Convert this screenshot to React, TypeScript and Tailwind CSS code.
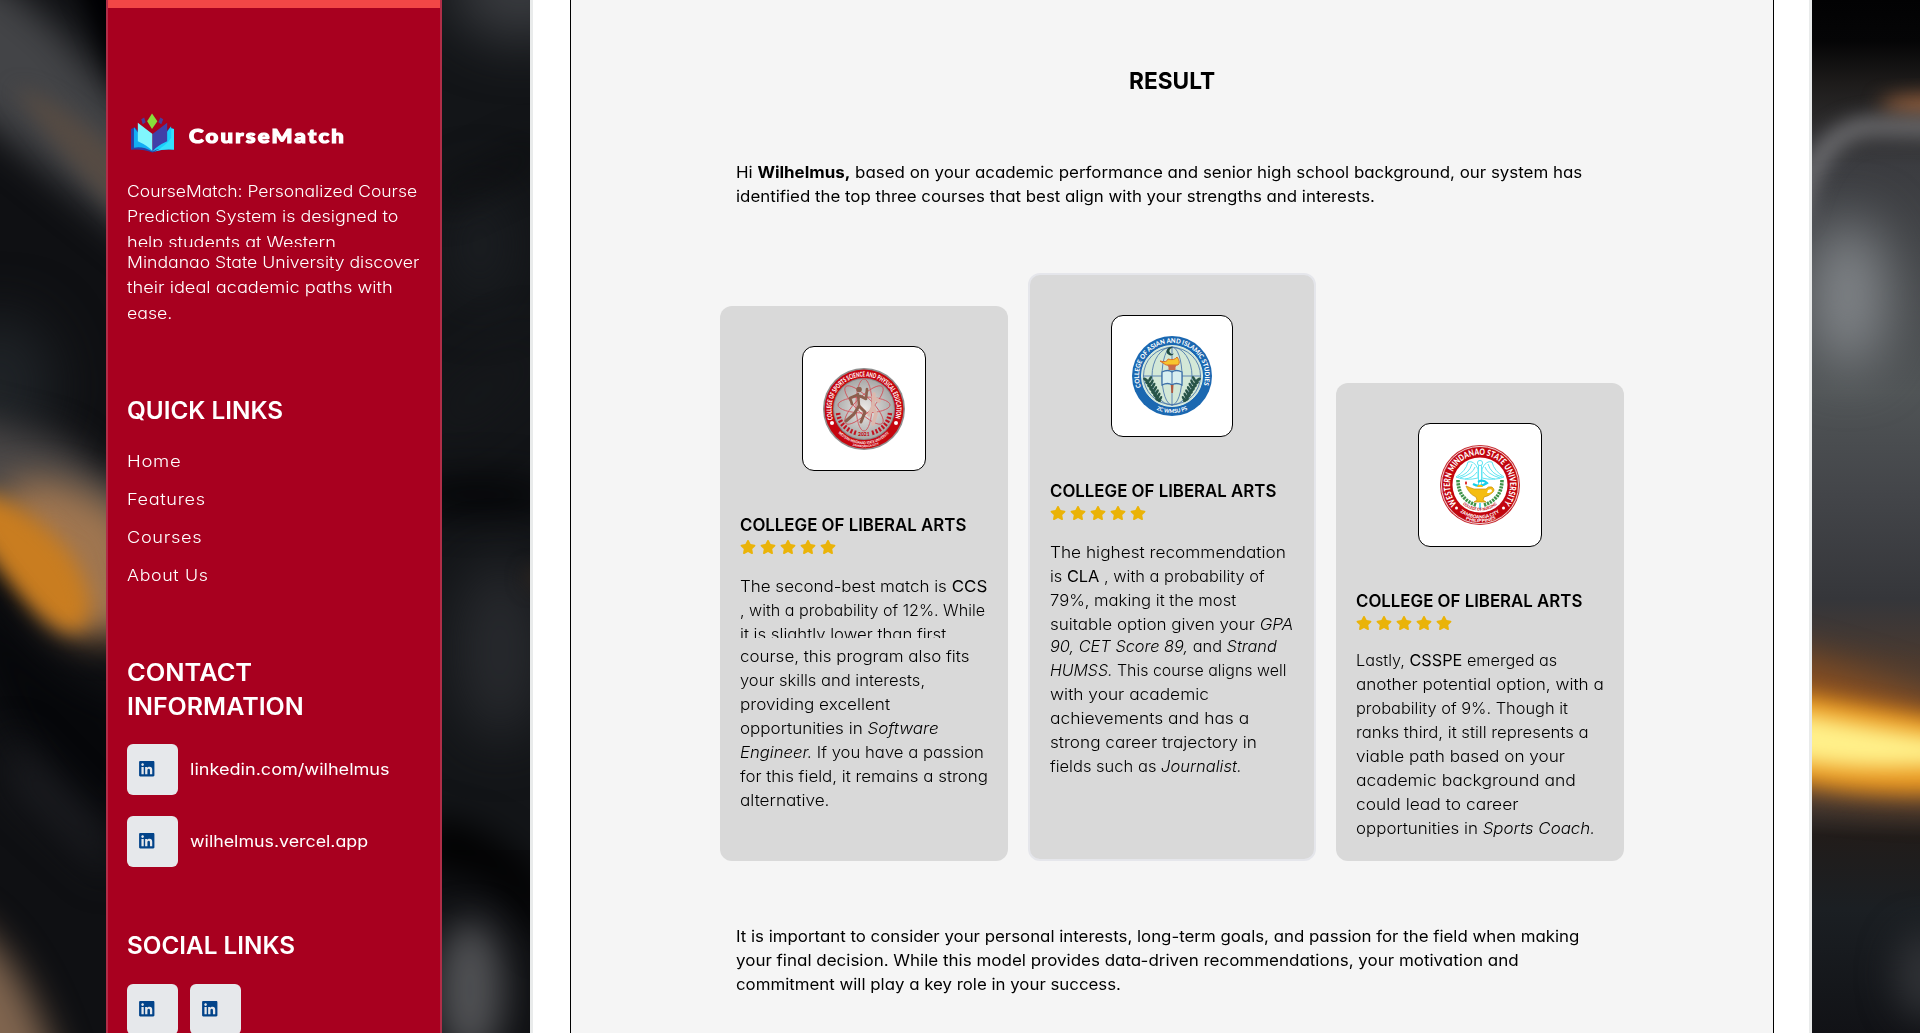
import { useLayoutEffect, useRef, type ReactNode } from "react";
import { FaLinkedin, FaStar } from "react-icons/fa";

/** One line of copy stretched horizontally so that it spans `w` pixels. */
function Line({ w, className = "", children }: { w: number; className?: string; children: ReactNode }) {
  const ref = useRef<HTMLSpanElement>(null);
  useLayoutEffect(() => {
    const el = ref.current;
    if (!el) return;
    el.style.transform = `scaleX(${w / el.offsetWidth})`;
  }, [w]);
  return (
    <div className={`whitespace-nowrap ${className}`}>
      <span ref={ref} className="inline-block origin-left">{children}</span>
    </div>
  );
}

function Backdrop() {
  return (
    <svg aria-hidden="true" className="absolute inset-0 h-full w-full" viewBox="0 0 1920 1033" preserveAspectRatio="none">
      <defs>
        <filter id="b8" x="-100%" y="-100%" width="300%" height="300%" colorInterpolationFilters="sRGB"><feGaussianBlur stdDeviation="10" /></filter>
        <filter id="b14" x="-150%" y="-150%" width="400%" height="400%" colorInterpolationFilters="sRGB"><feGaussianBlur stdDeviation="18" /></filter>
        <filter id="b24" x="-200%" y="-200%" width="500%" height="500%" colorInterpolationFilters="sRGB"><feGaussianBlur stdDeviation="28" /></filter>
        <clipPath id="leftStrip"><rect width="110" height="1033" /></clipPath>
        <clipPath id="midStrip"><rect x="436" width="100" height="1033" /></clipPath>
        <clipPath id="rightStrip"><rect x="1808" width="112" height="1033" /></clipPath>
        <linearGradient id="rightFade" x1="0" y1="0" x2="0" y2="1">
          <stop offset="0" stopColor="#020203" />
          <stop offset="0.04" stopColor="#050506" />
          <stop offset="0.08" stopColor="#1d1b1a" />
          <stop offset="0.12" stopColor="#2c2b2c" />
          <stop offset="0.16" stopColor="#3b3c40" />
          <stop offset="0.38" stopColor="#505456" />
          <stop offset="0.48" stopColor="#434549" />
          <stop offset="0.58" stopColor="#35363a" />
          <stop offset="0.64" stopColor="#4a3a30" />
          <stop offset="0.76" stopColor="#4c4440" />
          <stop offset="0.81" stopColor="#211c1a" />
          <stop offset="0.88" stopColor="#1b1f23" />
          <stop offset="1" stopColor="#111216" />
        </linearGradient>
      </defs>
      <rect width="1920" height="1033" fill="#0f1013" />
      <g clipPath="url(#leftStrip)">
        <path d="M-80 -40 L0 -20 L60 30 L160 150 L160 260 L-80 70Z" fill="#434447" filter="url(#b14)" />
        <path d="M60 -60 L180 -60 L180 130 L120 90Z" fill="#000002" filter="url(#b8)" />
        <path d="M15 88 Q60 96 130 165 L130 220 Q70 170 15 88Z" fill="#564b43" filter="url(#b8)" />
        <ellipse cx="0" cy="385" rx="55" ry="70" fill="#1f2327" filter="url(#b24)" />
        <path d="M-60 410 L60 440 L150 510 L150 610 L-60 530Z" fill="#4a4747" filter="url(#b14)" />
        <path d="M0 490 Q50 460 130 520 L150 625 Q90 655 50 620Z" fill="#a07650" filter="url(#b14)" />
        <path d="M-30 490 Q20 495 68 550 Q104 605 82 630 Q45 645 -30 525Z" fill="#c97d20" filter="url(#b8)" />
        <path d="M-40 610 Q20 780 130 860 L130 700 Q60 700 -40 560Z" fill="#06070a" filter="url(#b14)" />
        <path d="M10 730 L110 830 L110 880 L10 790Z" fill="#1a1b1f" filter="url(#b14)" />
        <path d="M-50 910 Q20 940 62 1080 L-50 1080Z" fill="#80654f" filter="url(#b14)" />
      </g>
      <g clipPath="url(#midStrip)">
        <rect x="436" width="100" height="850" fill="#131518" />
        <ellipse cx="520" cy="-10" rx="70" ry="50" fill="#3a3c40" filter="url(#b24)" />
        <ellipse cx="480" cy="245" rx="28" ry="60" fill="#1d2024" filter="url(#b24)" />
        <path d="M436 190 L540 140 L540 160 L436 210Z" fill="#0a0b0d" filter="url(#b14)" />
        <path d="M436 410 L540 340 L540 360 L436 440Z" fill="#191b1e" filter="url(#b24)" />
        <ellipse cx="480" cy="495" rx="80" ry="20" fill="#050608" filter="url(#b14)" />
        <ellipse cx="500" cy="650" rx="45" ry="90" fill="#282a2e" filter="url(#b24)" />
        <ellipse cx="540" cy="578" rx="14" ry="10" fill="#33271f" filter="url(#b8)" />
        <path d="M420 820 Q500 820 550 900 L550 950 Q490 850 420 870Z" fill="#000000" filter="url(#b14)" />
        <ellipse cx="470" cy="990" rx="34" ry="70" fill="#505154" filter="url(#b14)" />
      </g>
      <g clipPath="url(#rightStrip)">
        <rect x="1800" width="130" height="1033" fill="url(#rightFade)" />
        <ellipse cx="1930" cy="105" rx="50" ry="9" fill="#a4663e" filter="url(#b8)" />
        <path d="M1796 220 Q1815 130 1870 126 L1980 128" fill="none" stroke="#747477" strokeWidth="17" filter="url(#b8)" />
        <ellipse cx="1848" cy="295" rx="38" ry="75" fill="#84888c" filter="url(#b24)" />
        <path d="M1740 640 Q1860 670 1990 715 L1990 800 Q1860 806 1740 775Z" fill="#8a4f20" filter="url(#b14)" />
        <path d="M1760 686 Q1850 702 1980 726 L1980 790 Q1850 800 1760 772Z" fill="#eb9a22" filter="url(#b8)" />
        <path d="M1760 706 Q1850 724 1980 744 L1980 762 Q1850 776 1760 754Z" fill="#fff08a" filter="url(#b8)" />
        <ellipse cx="1925" cy="975" rx="30" ry="45" fill="#303236" filter="url(#b14)" />
      </g>
    </svg>
  );
}

function BookLogo() {
  return (
    <svg className="h-[41px] w-[43px] shrink-0" viewBox="0 0 44 41" aria-hidden="true">
      <path d="M0 16 L4 14 L22 35 L40 14 L44 16 V37 Q32 36 22 40 Q12 36 0 37Z" fill="#2c3fa5" />
      <path d="M3 14 L22 39 Q12 33 3 35Z" fill="#12aef5" />
      <path d="M41 13 L22 39 Q32 34 42 35.500Z" fill="#19cffb" />
      <path d="M44 16 V37 Q33 36 24 39 Q36 33 41 25 V15Z" fill="#36e0fb" />
      <path d="M7 9.500 L22 21 V38.500 Q17 33 7 28.500Z" fill="#80f6fd" />
      <path d="M37 9.500 L22 21 V38.500 Q27 33 37 28.500Z" fill="#403fa8" />
      <path d="M21.500 0 L27 8 L21.500 16 L16.500 8Z" fill="#87de3b" />
      <path d="M10.500 6 L13.500 4 L15 9 L12 11Z M33 6 L30 4 L28 9 L31 11Z" fill="#463e9c" />
    </svg>
  );
}

function LinkedInTile() {
  return (
    <div className="h-[51px] w-[51px] shrink-0 rounded-[6px] bg-[#e6e8eb] pt-[16px] pl-[11px]">
      <FaLinkedin className="h-[17.500px] w-[17.500px] text-[#03448a]" />
    </div>
  );
}

function Sidebar() {
  return (
    <aside className="relative ml-[106px] h-full w-[336px] shrink-0 overflow-hidden border-x-2 border-[#b02e48] bg-[#a8001f] text-white">
      <div className="h-[8px] bg-[#f24646]" />
      <div className="pl-[19px]">
        <div className="mt-[105px] flex h-[41px] gap-[15px] pl-[4px]">
          <BookLogo />
          <Line w={157} className="mt-[8px] font-[Lato] text-[19.500px] leading-[30px] font-black tracking-[2px] [-webkit-text-stroke:1.2px_white]">CourseMatch</Line>
        </div>
        <div className="mt-[25px] h-[68px] overflow-hidden text-[16.500px] leading-[25.300px] font-light">
          <Line w={290}>CourseMatch: Personalized Course</Line>
          <Line w={271}>Prediction System is designed to</Line>
          <Line w={209}>help students at Western</Line>
        </div>
        <div className="mt-[3px] text-[16.500px] leading-[25.300px] font-light">
          <Line w={292}>Mindanao State University discover</Line>
          <Line w={266}>their ideal academic paths with</Line>
          <Line w={45}>ease.</Line>
        </div>
        <h2 className="mt-[68px] text-[24px] leading-[34px] font-semibold"><Line w={156}>QUICK LINKS</Line></h2>
        <nav className="mt-[14px] text-[16.500px] leading-[38px] font-light tracking-[0.6px]">
          <Line w={54}>Home</Line>
          <Line w={79}>Features</Line>
          <Line w={75}>Courses</Line>
          <Line w={82}>About Us</Line>
        </nav>
        <h2 className="mt-[62px] text-[24px] leading-[34px] font-semibold">
          <Line w={125}>CONTACT</Line>
          <Line w={177}>INFORMATION</Line>
        </h2>
        <div className="mt-[20px] flex flex-col gap-[21px] text-[16px]">
          <div className="flex items-center gap-[12px]"><LinkedInTile /><Line w={200}>linkedin.com/wilhelmus</Line></div>
          <div className="flex items-center gap-[12px]"><LinkedInTile /><Line w={178}>wilhelmus.vercel.app</Line></div>
        </div>
        <h2 className="mt-[62px] text-[24px] leading-[34px] font-semibold"><Line w={168}>SOCIAL LINKS</Line></h2>
        <div className="mt-[21px] flex gap-[12px]"><LinkedInTile /><LinkedInTile /></div>
      </div>
    </aside>
  );
}

function SportsSeal() {
  return (
    <svg className="h-[82px] w-[82px]" viewBox="0 0 82 82">
      <defs>
        <radialGradient id="steel"><stop offset="0" stopColor="#ece9e7" /><stop offset="1" stopColor="#a9a9a8" /></radialGradient>
        <path id="sportTop" d="M10.400 52 A32.500 32.500 0 1 1 71.600 52" />
        <path id="sportLow" d="M14 63.500 A35.100 35.100 0 0 0 68 63.500" />
        <path id="sportLow2" d="M18 71.600 A38.300 38.300 0 0 0 64 71.600" />
      </defs>
      <circle cx="41" cy="41" r="41" fill="#8f8f8f" />
      <circle cx="41" cy="41" r="39.500" fill="#c6060f" />
      <circle cx="41" cy="41" r="31" fill="#8b8787" />
      <circle cx="41" cy="41" r="30" fill="url(#steel)" />
      <g fill="none" stroke="#d0555c" strokeWidth="0.9">
        <ellipse cx="41" cy="37" rx="8" ry="26" />
        <ellipse cx="41" cy="37" rx="8" ry="26" transform="rotate(45 41 37)" />
        <ellipse cx="41" cy="37" rx="8" ry="26" transform="rotate(90 41 37)" />
        <ellipse cx="41" cy="37" rx="8" ry="26" transform="rotate(135 41 37)" />
      </g>
      <g fill="none" strokeLinecap="round" strokeLinejoin="round">
        <path d="M51 26 L50 38 L53 46 L50 56 M50 29 L56 33 M50 38 L46 47" stroke="#dcb8ad" strokeWidth="3.500" />
        <path d="M35 26 L36 38 M34 27 L27 30 L29 36 M37 28 L43 31 L44 21" stroke="#8c5f4e" strokeWidth="2.600" />
        <path d="M36 38 L42 44 L38 54 M36 38 L31 46 L23 53" stroke="#8c5f4e" strokeWidth="3" />
      </g>
      <circle cx="36" cy="21.500" r="2.800" fill="#8c5f4e" />
      <path d="M15 45 Q17 60 33 65 M67 45 Q65 60 49 65" fill="none" stroke="#c21320" strokeWidth="4.500" strokeDasharray="2 1.800" />
      <circle cx="9" cy="55" r="2" fill="#fff" />
      <circle cx="73" cy="55" r="2" fill="#fff" />
      <text className="font-[Lato] text-[6.800px] font-black" fill="#fff"><textPath href="#sportTop" startOffset="1" textLength="121" lengthAdjust="spacingAndGlyphs">COLLEGE OF SPORTS SCIENCE AND PHYSICAL EDUCATION</textPath></text>
      <text className="font-[Lato] text-[5px] font-black" fill="#c6060f" x="35" y="68">2021</text>
      <text className="font-[Lato] text-[3.800px] font-bold" fill="#fff"><textPath href="#sportLow" startOffset="2" textLength="57" lengthAdjust="spacingAndGlyphs">WESTERN MINDANAO STATE UNIVERSITY</textPath></text>
      <text className="font-[Lato] text-[3px] font-bold" fill="#fff"><textPath href="#sportLow2" startOffset="13">ZAMBOANGA CITY</textPath></text>
    </svg>
  );
}

function IslamicSeal() {
  const leaves = [0, 1, 2, 3, 4, 5, 6];
  return (
    <svg className="h-[80px] w-[80px]" viewBox="0 0 80 80">
      <defs>
        <path id="islTop" d="M9.300 52 A33 33 0 1 1 70.700 52" />
        <path id="islLow" d="M21 71.800 A37 37 0 0 0 59 71.800" />
      </defs>
      <circle cx="40" cy="40" r="40" fill="#1b68b1" />
      <circle cx="40" cy="40" r="30.500" fill="#d3e8d7" stroke="#dfeee8" strokeWidth="1" />
      <g fill="none" stroke="#4f79ad" strokeWidth="0.9">
        <circle cx="40" cy="40" r="28.500" />
        <ellipse cx="40" cy="40" rx="20" ry="29" />
        <ellipse cx="40" cy="40" rx="10" ry="29" />
        <path d="M11 40 H69 M40 10 V70" />
      </g>
      <g fill="#285448">
        {leaves.map((i) => (
          <g key={i}>
            <ellipse cx={14 + i * 2} cy={44 + i * 3.300} rx="1.500" ry="3.300" transform={`rotate(-55 ${14 + i * 2} ${44 + i * 3.3})`} />
            <ellipse cx={18 + i * 1.700} cy={43 + i * 3.300} rx="1.300" ry="3.200" transform={`rotate(30 ${18 + i * 1.7} ${43 + i * 3.3})`} />
            <ellipse cx={66 - i * 2} cy={44 + i * 3.300} rx="1.500" ry="3.300" transform={`rotate(55 ${66 - i * 2} ${44 + i * 3.3})`} />
            <ellipse cx={62 - i * 1.700} cy={43 + i * 3.300} rx="1.300" ry="3.200" transform={`rotate(-30 ${62 - i * 1.7} ${43 + i * 3.3})`} />
          </g>
        ))}
      </g>
      <path d="M41 12 A4 4 0 1 0 42 17.500 A3 3 0 1 1 41 12Z" fill="#1f4a42" />
      <path d="M33 26 H47 L43.500 31 V34 H36.500 V31Z" fill="#c76b4c" />
      <path d="M28 25 Q35 27 36 23 Q42 25 45 21 Q49 26 46 29 H34Z" fill="#f7c52e" stroke="#d96f2b" strokeWidth="1" />
      <path d="M30 36 Q36 33 40 36 Q44 33 50 36 V49 Q44 46 40 49 Q36 46 30 49Z" fill="#d9eff0" stroke="#3d70a8" strokeWidth="1.300" />
      <path d="M40 36 V49" stroke="#3d70a8" />
      <path d="M38.800 49 H41.500 L41 57 H39.300Z" fill="#b05b41" />
      <text className="font-[Lato] text-[6.500px] font-black" fill="#fff"><textPath href="#islTop" startOffset="1" textLength="124" lengthAdjust="spacingAndGlyphs">COLLEGE OF ASIAN AND ISLAMIC STUDIES</textPath></text>
      <text className="font-[Lato] text-[5.500px] font-black" fill="#fff"><textPath href="#islLow" startOffset="4" textLength="32" lengthAdjust="spacingAndGlyphs">ZC WMSU PS</textPath></text>
    </svg>
  );
}

function NursingSeal() {
  return (
    <svg className="h-[80px] w-[80px]" viewBox="0 0 80 80">
      <defs>
        <path id="nurTop" d="M18.800 61.200 A30 30 0 1 1 61.200 61.200" />
        <path id="nurMid" d="M22 58.500 A26 26 0 0 0 58 58.500" />
        <path id="nurLow" d="M17 64.500 A33.600 33.600 0 0 0 63 64.500" />
        <path id="nurLow2" d="M22 72.600 A37.200 37.200 0 0 0 58 72.600" />
      </defs>
      <circle cx="40" cy="40" r="40" fill="#c5272d" />
      <circle cx="40" cy="40" r="38.600" fill="none" stroke="#fff" strokeWidth="0.800" />
      <circle cx="40" cy="40" r="37.500" fill="#c2060f" />
      <circle cx="40" cy="40" r="27.500" fill="#fff" />
      <g fill="none" stroke="#62e5f2" strokeWidth="1">
        <path d="M38 24 Q34 15 28 17 Q26 26 16 32 Q26 36 38 33Z M35 22 Q33 29 20 33 M32 19 Q29 29 18 32 M37 27 Q33 33 25 34" />
        <path d="M42 24 Q46 15 52 17 Q54 26 64 32 Q54 36 42 33Z M45 22 Q47 29 60 33 M48 19 Q51 29 62 32 M43 27 Q47 33 55 34" />
        <path d="M38.500 20 V41 M41.500 20 V41" />
        <path d="M33 39 Q40 43 47 38 Q43 34 38 37" strokeWidth="2.200" stroke="#16cde9" />
      </g>
      <circle cx="40" cy="18" r="2.600" fill="#fff" stroke="#62e5f2" />
      <path d="M18 35 Q18 54 36 60 M62 35 Q62 54 44 60" fill="none" stroke="#3f9349" strokeWidth="3.600" strokeDasharray="2.200 0.900" />
      <path d="M26 41 Q31 43 34 44 H46 Q48 41 52 42 Q56 45 52 48 Q49 51 44 52 L43 55 L46 57 H34 L37 55 L36 52 Q29 49 26 41Z" fill="#f5bd12" stroke="#c98d10" strokeWidth="0.700" />
      <path d="M48 45 Q52 43 52 46 Q51 48 47 48Z" fill="#fff" />
      <path d="M37 42 H43 L42 40 H38Z" fill="#f5bd12" />
      <ellipse cx="26" cy="38" rx="1" ry="1.800" fill="#d22" />
      <path d="M40 58 V64" stroke="#16cde9" strokeWidth="1.400" />
      <circle cx="16.500" cy="63" r="1.500" fill="#fff" />
      <circle cx="63.500" cy="63" r="1.500" fill="#fff" />
      <text className="font-[Lato] text-[8.800px] font-black" fill="#fff"><textPath href="#nurTop" startOffset="3" textLength="134" lengthAdjust="spacingAndGlyphs">WESTERN MINDANAO STATE UNIVERSITY</textPath></text>
      <text className="font-[Lato] text-[4px] font-black" fill="#c2060f"><textPath href="#nurMid" startOffset="1" textLength="37" lengthAdjust="spacingAndGlyphs">COLLEGE OF NURSING</textPath></text>
      <text className="font-[Lato] text-[4.800px] font-black" fill="#fff"><textPath href="#nurLow" startOffset="4" textLength="42" lengthAdjust="spacingAndGlyphs">ZAMBOANGA CITY</textPath></text>
      <text className="font-[Lato] text-[4.200px] font-black" fill="#fff"><textPath href="#nurLow2" startOffset="4" textLength="31" lengthAdjust="spacingAndGlyphs">PHILIPPINES</textPath></text>
    </svg>
  );
}

function CardHead({ box, gap = "mb-[19px]", children }: { box: string; gap?: string; children: ReactNode }) {
  return (
    <>
      <div className={`mx-auto mt-[40px] flex shrink-0 items-center justify-center rounded-[12px] border border-black bg-white ${box}`}>{children}</div>
      <h3 className="mt-[42px] text-[17.500px] leading-[24px] font-semibold"><Line w={226}>COLLEGE OF LIBERAL ARTS</Line></h3>
      <div className={`mt-[2px] flex h-[16px] gap-[4px] text-[#eab308] ${gap}`}>
        {[0, 1, 2, 3, 4].map((i) => <FaStar key={i} className="h-[16px] w-[16px]" />)}
      </div>
    </>
  );
}

function B({ children }: { children: ReactNode }) {
  return <span className="font-normal">{children}</span>;
}

function Results() {
  return (
    <div className="mt-[65px] flex h-[588px] items-end gap-[20px] text-[16px] leading-[24px] font-light">
      <article className="h-[555px] w-[288px] rounded-[12px] bg-[#d9d9d9] px-[20px]">
        <CardHead box="h-[125px] w-[124px]"><SportsSeal /></CardHead>
        <div className="h-[64px] overflow-hidden">
          <Line w={247}>The second-best match is <B>CCS</B></Line>
          <Line w={245}>, with a probability of 12%. While</Line>
          <Line w={206}>it is slightly lower than first</Line>
        </div>
        <div className="mt-[6px]">
          <Line w={229}>course, this program also fits</Line>
          <Line w={185}>your skills and interests,</Line>
          <Line w={150}>providing excellent</Line>
          <Line w={199}>opportunities in <i>Software</i></Line>
          <Line w={244}><i>Engineer.</i> If you have a passion</Line>
          <Line w={248}>for this field, it remains a strong</Line>
          <Line w={89}>alternative.</Line>
        </div>
      </article>
      <article className="h-[588px] w-[288px] rounded-[12px] border-2 border-[#e5e6eb] bg-[#d9d9d9] px-[20px]">
        <CardHead box="h-[122px] w-[122px]"><IslamicSeal /></CardHead>
        <Line w={236}>The highest recommendation</Line>
        <Line w={215}>is <B>CLA</B> , with a probability of</Line>
        <Line w={186}>79%, making it the most</Line>
        <Line w={243}>suitable option given your <i>GPA</i></Line>
        <div className="mt-[-2px]">
          <Line w={227}><i>90, CET Score 89,</i> and <i>Strand</i></Line>
          <Line w={236}><i>HUMSS.</i> This course aligns well</Line>
          <Line w={159}>with your academic</Line>
          <Line w={199}>achievements and has a</Line>
          <Line w={207}>strong career trajectory in</Line>
          <Line w={192}>fields such as <i>Journalist.</i></Line>
        </div>
      </article>
      <article className="h-[478px] w-[288px] rounded-[12px] bg-[#d9d9d9] px-[20px]">
        <CardHead box="h-[124px] w-[124px]" gap="mb-[17px]"><NursingSeal /></CardHead>
        <Line w={201}>Lastly, <B>CSSPE</B> emerged as</Line>
        <Line w={248}>another potential option, with a</Line>
        <Line w={212}>probability of 9%. Though it</Line>
        <Line w={233}>ranks third, it still represents a</Line>
        <Line w={209}>viable path based on your</Line>
        <Line w={220}>academic background and</Line>
        <Line w={162}>could lead to career</Line>
        <Line w={239}>opportunities in <i>Sports Coach.</i></Line>
      </article>
    </div>
  );
}

export default function App() {
  return (
    <div className="relative flex h-[1033px] w-[1920px] overflow-hidden bg-[#0d0e11] font-[Inter,sans-serif] [font-feature-settings:'cv11']">
      <Backdrop />
      <Sidebar />
      <main className="relative ml-[88px] h-full w-[1282px] shrink-0 border-x-[3px] border-[#e9ebeb] bg-white pl-[37px] text-black">
        <section className="h-full w-[1204px] border-x border-black bg-[#f5f5f5] pl-[149px]">
          <h1 className="ml-[409px] pt-[64px] text-[23.500px] leading-[34px] font-bold"><Line w={86}>RESULT</Line></h1>
          <div className="mt-[62px] pl-[16px] text-[16px] leading-[24px]">
            <Line w={846}>Hi <b>Wilhelmus,</b> based on your academic performance and senior high school background, our system has</Line>
            <Line w={639}>identified the top three courses that best align with your strengths and interests.</Line>
          </div>
          <Results />
          <div className="mt-[63px] pl-[16px] text-[16px] leading-[24px]">
            <Line w={843}>It is important to consider your personal interests, long-term goals, and passion for the field when making</Line>
            <Line w={783}>your final decision. While this model provides data-driven recommendations, your motivation and</Line>
            <Line w={385}>commitment will play a key role in your success.</Line>
          </div>
        </section>
      </main>
    </div>
  );
}
